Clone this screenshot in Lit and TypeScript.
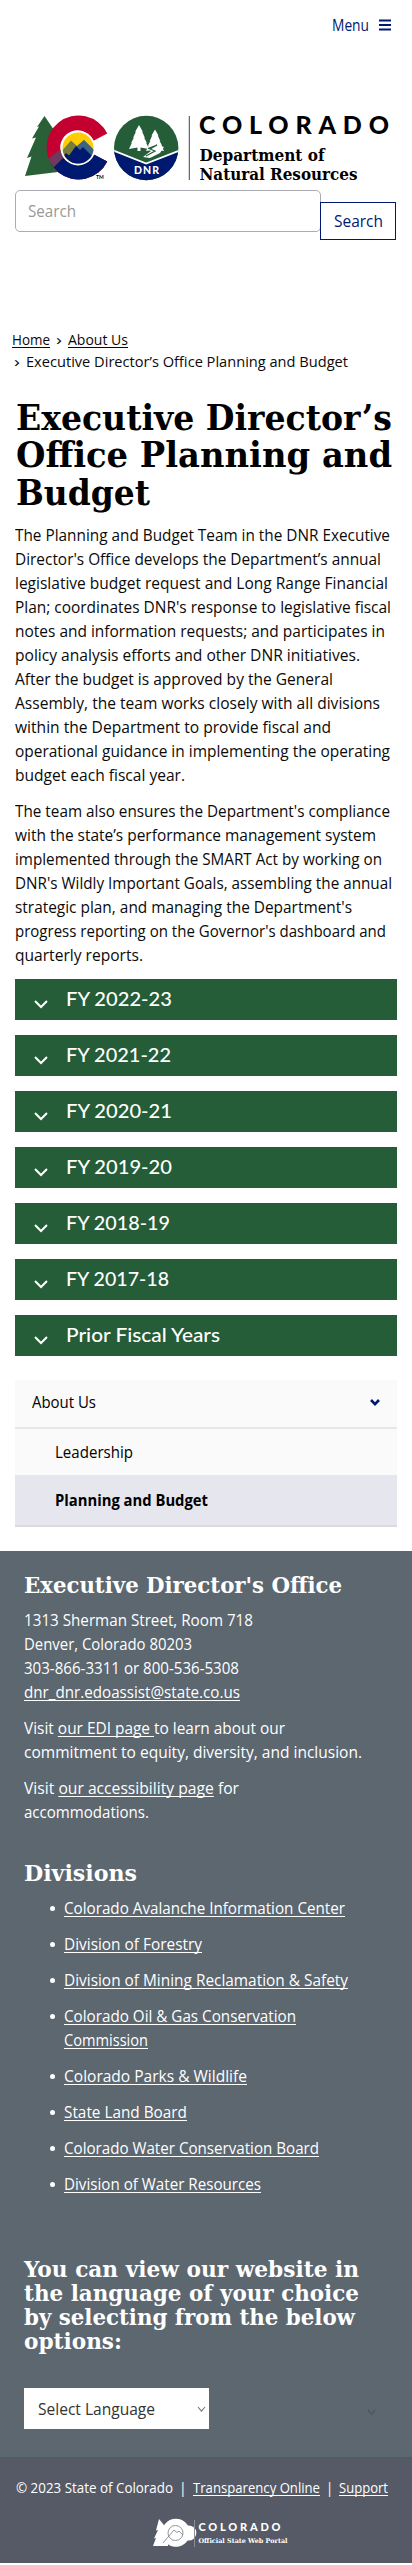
import { LitElement, html, css, svg } from "lit";
import { customElement, property } from "lit/decorators.js";

/** One line of text, condensed or expanded horizontally to a given width. */
@customElement("fit-line")
class FitLine extends LitElement {
  @property({ type: Number }) w = 0;
  static styles = css`
    :host { display: block; white-space: nowrap; }
    .t { display: inline-block; transform-origin: 0 50%; vertical-align: top; }
  `;
  render() {
    return html`<span class="t"><slot></slot></span>`;
  }
  firstUpdated() {
    const t = this.renderRoot.querySelector(".t") as HTMLElement;
    const natural = t.getBoundingClientRect().width;
    if (natural && this.w) {
      t.style.transform = `scaleX(${this.w / natural})`;
      this.style.width = `${this.w}px`;
    }
  }
}

const INTRO: [string, number][] = [
  ["The Planning and Budget Team in the DNR Executive", 375],
  ["Director's Office develops the Department’s annual", 366],
  ["legislative budget request and Long Range Financial", 373],
  ["Plan; coordinates DNR's response to legislative fiscal", 376],
  ["notes and information requests; and participates in", 370],
  ["policy analysis efforts and other DNR initiatives.", 345],
  ["After the budget is approved by the General", 318],
  ["Assembly, the team works closely with all divisions", 365],
  ["within the Department to provide fiscal and", 316],
  ["operational guidance in implementing the operating", 375],
  ["budget each fiscal year.", 170],
];
const TEAM: [string, number][] = [
  ["The team also ensures the Department's compliance", 375],
  ["with the state’s performance management system", 361],
  ["implemented through the SMART Act by working on", 367],
  ["DNR's Wildly Important Goals, assembling the annual", 377],
  ["strategic plan, and managing the Department's", 337],
  ["progress reporting on the Governor's dashboard and", 371],
  ["quarterly reports.", 128],
];
const YEARS: [string, number][] = [
  ["FY 2022-23", 106], ["FY 2021-22", 105], ["FY 2020-21", 106], ["FY 2019-20", 106],
  ["FY 2018-19", 104], ["FY 2017-18", 103], ["Prior Fiscal Years", 154],
];
const DIVISIONS: [string, number][][] = [
  [["Colorado Avalanche Information Center", 281]],
  [["Division of Forestry", 138]],
  [["Division of Mining Reclamation & Safety", 284]],
  [["Colorado Oil & Gas Conservation", 232], ["Commission", 84]],
  [["Colorado Parks & Wildlife", 183]],
  [["State Land Board", 123]],
  [["Colorado Water Conservation Board", 255]],
  [["Division of Water Resources", 197]],
];
const lines = (l: [string, number][]) => l.map(([t, w]) => html`<fit-line w=${w}>${t}</fit-line>`);

const pine = svg`<path d="M0-15 L4-8 L3-8.500 L6-2 L5-2.500 L8 3 L7 2.500 L10 9 L1.500 7.500 V11 H-1.500 V7.500 L-10 9 L-7 2.500 L-8 3 L-5-2.500 L-6-2 L-3-8.500 L-4-8Z"/>`;

@customElement("app-root")
class AppRoot extends LitElement {
  static styles = css`
    :host { display: block; width: 412px; height: 2565px; overflow: hidden; background: #fff; color: #0a0a0a;
      font: 15.5px/24px "Open Sans", "Noto Sans", sans-serif; }
    * { box-sizing: border-box; }
    h1, h2, h3, p, ul { margin: 0; padding: 0; }
    a { color: inherit; text-decoration: underline; text-underline-offset: 2px; text-decoration-thickness: 1px; text-decoration-skip-ink: none; }
    .menu { display: flex; justify-content: flex-end; align-items: center; gap: 10px; height: 28px; margin-top: 11px; padding-right: 21px; color: #001970; }
    .menu svg { display: block; }
    .brand { display: block; margin-top: 71px; }
    .search { display: flex; align-items: flex-start; height: 55px; margin: 5px 0 0 15px; }
    .field { width: 306px; height: 42px; padding: 8px 12px; border: 1px solid #a9adb3; border-radius: 5px; color: #999; font-size: 16px; }
    .go { width: 76px; height: 38px; margin: 12px 0 0 -1px; padding: 6px 13px; border: 1px solid #001970; background: #fff; color: #001970; font-size: 16px; }
    .crumbs { margin: 84px 0 0 12px; font-size: 14px; line-height: 22px; }
    .row { display: flex; }
    .crumbs .row { gap: 6px; }
    .crumbs .second { padding-left: 2px; gap: 6px; }
    h1, h2, h3 { font-family: "DejaVu Serif Condensed", "DejaVu Serif", serif; font-stretch: condensed; font-weight: 700; }
    h1 { margin: 25.500px 0 0 15.500px; color: #000; font-size: 36px; line-height: 37.500px; }
    .copy { margin: 12px 0 0 15px; }
    .copy p + p { margin-top: 12px; }
    .bars { display: grid; gap: 16px; margin: 12.300px 15px 0; }
    .bar { display: flex; align-items: center; height: 40.300px; margin-bottom: -0.300px; padding-left: 19px; background: #245d38; color: #fff; font: 500 19.500px/38px Lato, sans-serif; }
    .bar svg { margin: 10px 17.500px 0 0; }
    .side { margin: 24.500px 15px 0; background: #fafafa; color: #000; }
    .item { display: flex; justify-content: space-between; align-items: center; height: 49px; padding: 0 17px 2px; border-bottom: 2px solid #e6e7e9; }
    .sub { height: 46.500px; padding: 0 40px; border: 0; }
    .on { height: 51.500px; border-bottom: 2px solid #dcdce0; background: #e6e7ee; font-weight: 700; }
    footer { margin-top: 24px; height: 906.500px; padding: 22px 24px 0; background: #5c6770; color: #fff; }
    footer h2 { font-size: 22px; line-height: 24px; }
    footer p { margin-top: 11px; }
    footer p + p { margin-top: 12px; }
    .div { margin-top: 37.500px; }
    ul { display: grid; gap: 12px; margin: 11px 0 0 40px; list-style: none; }
    li { display: flex; margin-left: -14px; }
    li::before { content: ""; width: 5px; height: 5px; margin: 10px 9px 0 0; border-radius: 50%; background: #fff; }
    .lang { margin-top: 61px; }
    .pick { display: flex; align-items: center; margin-top: 35px; }
    .select { display: flex; align-items: center; justify-content: space-between; width: 185px; height: 41px; padding: 0 3px 0 14px; background: #fff; color: #333; font-size: 16px; }
    .ghost { margin-left: 158px; }
    .legal { height: 106px; padding-top: 17.500px; background: #565a66; border-top: 2px solid #515b65; color: #fff; font-size: 14px; line-height: 22px; }
    .legal .row { padding-left: 16px; gap: 6px; }
    .legal svg { display: block; margin: 17px 0 0 148px; }
  `;

  chevron(w: number, h: number, stroke: number, color: string) {
    return html`<svg width=${w} height=${h} viewBox="0 0 ${w} ${h}" fill="none" stroke=${color} stroke-width=${stroke}>
      <path d="M1 1 L${w / 2} ${h - stroke / 1.4} L${w - 1} 1"/></svg>`;
  }

  brand() {
    return html`<svg class="brand" width="412" height="75" viewBox="0 110 412 75">
      <defs><clipPath id="cc"><path d="M107.300 133.500 A32 32 0 1 0 107.300 161.500 L93 154 A17 17 0 1 1 93 141Z"/></clipPath>
      <clipPath id="in"><circle cx="78" cy="148" r="15.500"/></clipPath>
      <clipPath id="dn"><circle cx="146.200" cy="148" r="32.200"/></clipPath></defs>
      <path fill="#2a6038" d="M44.500 116 L58 136 V172 L25 176 L31.500 156.500 L27 158 L36 137.500 L32 138.500 L39 126.500 L37 127Z"/>
      <g clip-path="url(#cc)"><rect x="45" y="115" width="65" height="66" fill="#c3002f"/>
      <path d="M45 171 L63 153 L78 165 L110 145 V182 H45Z" fill="#001970"/>
      <path d="M45 161 L61 149 L64 157 L53 168 L47 170Z" fill="#6d3a5d"/></g>
      <circle cx="78" cy="148" r="17.400" fill="#fff"/>
      <g clip-path="url(#in)"><rect x="62" y="132" width="32" height="32" fill="#ffcd00"/>
      <path d="M60 153 L71 140.500 L77 146 L84 140 L95 151 V165 H60Z" fill="#7a7c3a"/>
      <path d="M73 150 L84 140 L95 151 V158 H73Z" fill="#3b6287"/>
      <path d="M60 160 L66 153 L69 155.500 L76 146 L80 150 L83 147 L96 160 V165 H60Z" fill="#001970"/></g>
      <text x="96" y="179" font-family="Lato" font-size="5" font-weight="700">TM</text>
      <g clip-path="url(#dn)"><rect x="113" y="115" width="67" height="67" fill="#245d38"/>
      <path d="M112 150 L146.200 163.500 L181 150 V182 H112Z" fill="#001970"/>
      <path d="M112 150 L146.200 163.500 L181 150" fill="none" stroke="#fff" stroke-width="1.800"/></g>
      <g fill="#fff"><g transform="translate(139 140)">${pine}</g><g transform="translate(155 143) scale(.9)">${pine}</g>
      <path d="M143 157 L151 151 L147 149 L158 145 L164 147 L160 153 L150 158Z"/></g>
      <path d="M148 148.500 L157 145 L150 149 L155 151 L146 156" fill="none" stroke="#245d38" stroke-width="1.200"/>
      <text x="134" y="174" fill="#fff" font-family="Lato" font-weight="900" font-size="10.500" textLength="25">DNR</text>
      <path d="M189.300 116 V180" stroke="#444" stroke-width="1"/>
      <text x="199" y="134" font-family="Lato" font-weight="900" font-size="25" textLength="190">COLORADO</text>
      <g font-family="DejaVu Serif Condensed, DejaVu Serif" font-weight="700" font-size="16.500">
      <text x="199.500" y="161" textLength="125" lengthAdjust="spacingAndGlyphs">Department of</text>
      <text x="199.500" y="180" textLength="158" lengthAdjust="spacingAndGlyphs">Natural Resources</text></g>
    </svg>`;
  }

  portal() {
    return html`<svg width="145" height="34" viewBox="148 2516 145 34">
      <path fill="#fff" d="M159 2519 L168 2530 V2546 H153 L156 2538 L154 2538.500 L158 2530 L156 2530.500Z"/>
      <path fill="#fff" d="M188.500 2526.500 A14 14 0 1 0 188.500 2539 L182 2536 A7.500 7.500 0 1 0 182 2530Z"/>
      <circle cx="175.500" cy="2533" r="7.500" fill="#fff" stroke="#777b84" stroke-width=".8"/>
      <path d="M163 2543 L174 2530 L177 2532.500 L179 2531 L183 2535" fill="none" stroke="#777b84" stroke-width=".8"/>
      <path d="M194.500 2520 V2547" stroke="#8b8e97"/>
      <text x="198.500" y="2531" fill="#fff" font-family="Lato" font-weight="900" font-size="11" textLength="82">COLORADO</text>
      <text x="198.500" y="2542.800" fill="#fff" font-family="DejaVu Serif Condensed, DejaVu Serif" font-weight="700" font-size="6.500" textLength="89" lengthAdjust="spacingAndGlyphs">Official State Web Portal</text>
    </svg>`;
  }

  render() {
    return html`
      <nav class="menu"><fit-line w="37">Menu</fit-line>
        <svg width="12" height="12" viewBox="0 0 12 12"><path d="M0 1.500H12M0 6H12M0 10.500H12" stroke="#001970" stroke-width="1.800"/></svg></nav>
      ${this.brand()}
      <div class="search"><div class="field"><fit-line w="48">Search</fit-line></div><div class="go"><fit-line w="49">Search</fit-line></div></div>
      <div class="crumbs">
        <div class="row"><fit-line w="38"><a>Home</a></fit-line><fit-line w="6">›</fit-line><fit-line w="60"><a>About Us</a></fit-line></div>
        <div class="row second"><fit-line w="6">›</fit-line><fit-line w="322">Executive Director’s Office Planning and Budget</fit-line></div>
      </div>
      <h1><fit-line w="376">Executive Director’s</fit-line><fit-line w="376">Office Planning and</fit-line><fit-line w="134">Budget</fit-line></h1>
      <div class="copy"><p>${lines(INTRO)}</p><p>${lines(TEAM)}</p></div>
      <div class="bars">${YEARS.map(([t, w]) => html`<div class="bar">${this.chevron(14, 8.5, 2, "#fff")}<fit-line w=${w}>${t}</fit-line></div>`)}</div>
      <div class="side">
        <div class="item"><fit-line w="64">About Us</fit-line>${this.chevron(10, 7, 2.6, "#001970")}</div>
        <div class="item sub"><fit-line w="78">Leadership</fit-line></div>
        <div class="item sub on"><fit-line w="153">Planning and Budget</fit-line></div>
      </div>
      <footer>
        <h2><fit-line w="318">Executive Director's Office</fit-line></h2>
        <p><fit-line w="229">1313 Sherman Street, Room 718</fit-line><fit-line w="168">Denver, Colorado 80203</fit-line>
        <fit-line w="215">303-866-3311 or 800-536-5308</fit-line><fit-line w="216"><a>dnr_dnr.edoassist@state.co.us</a></fit-line></p>
        <p><fit-line w="261">Visit <a>our EDI page </a>to learn about our</fit-line><fit-line w="338">commitment to equity, diversity, and inclusion.</fit-line></p>
        <p><fit-line w="215">Visit <a>our accessibility page</a> for</fit-line><fit-line w="125">accommodations.</fit-line></p>
        <h2 class="div"><fit-line w="113">Divisions</fit-line></h2>
        <ul>${DIVISIONS.map((d) => html`<li><div>${d.map(([t, w]) => html`<fit-line w=${w}><a>${t}</a></fit-line>`)}</div></li>`)}</ul>
        <h2 class="lang"><fit-line w="335">You can view our website in</fit-line><fit-line w="335">the language of your choice</fit-line>
        <fit-line w="331">by selecting from the below</fit-line><fit-line w="98">options:</fit-line></h2>
        <div class="pick"><div class="select"><fit-line w="117">Select Language</fit-line>${this.chevron(9, 6, 1.1, "#777")}</div>
        <div class="ghost">${this.chevron(9, 6, 1.3, "#4b555e")}</div></div>
      </footer>
      <div class="legal">
        <div class="row"><fit-line w="157">© 2023 State of Colorado</fit-line><span>|</span><fit-line w="127"><a>Transparency Online</a></fit-line><span>|</span><fit-line w="49"><a>Support</a></fit-line></div>
        ${this.portal()}
      </div>`;
  }
}
